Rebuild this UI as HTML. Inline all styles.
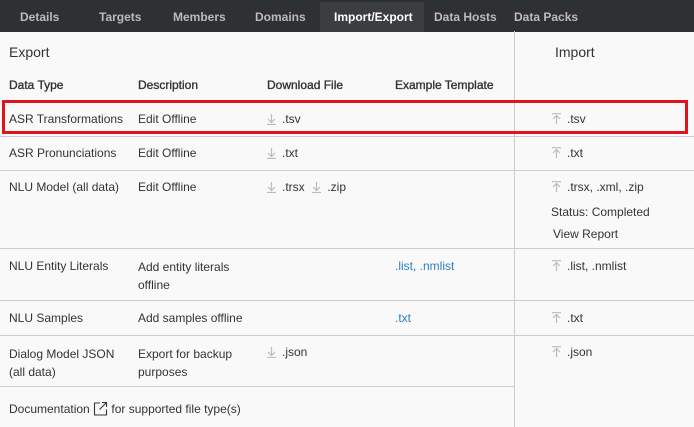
<!DOCTYPE html>
<html><head><style>
body{margin:0;width:694px;height:427px;background:#f9f9f9;font-family:"Liberation Sans",sans-serif;font-size:12px;color:#333;position:relative;overflow:hidden}
.nav{position:absolute;left:0;top:0;width:694px;height:31px;background:#2f3032;border-top:1px solid #233}
.nav span{position:absolute;top:9px;color:#bbb;font-weight:bold;font-size:12px}
.act{position:absolute;left:320px;top:1px;width:104px;height:30px;background:#3c3d3f}
.t{position:absolute;white-space:nowrap}
.hd{-webkit-text-stroke:0.35px #333}
.h{position:absolute;height:1px;background:#ccc;left:0;width:694px}
.v{position:absolute;left:514px;top:31px;width:1px;height:396px;background:#ccc}
.blue{color:#2e7fc0}
svg.a{vertical-align:-2px;margin-right:5px}
.red{position:absolute;left:2px;top:100px;width:680px;height:28px;border:3px solid #e0141e}
</style></head><body>
<svg width="0" height="0" style="position:absolute"><defs>
<symbol id="d" viewBox="0 0 11 12"><path d="M5.5 1v8M2 6l3.5 3.5L9 6M1 11.5h9" fill="none" stroke="#bbb" stroke-width="1.2"/></symbol>
<symbol id="u" viewBox="0 0 11 12"><path d="M5.5 11V3M2 6l3.5-3.5L9 6M1 .7h9" fill="none" stroke="#bbb" stroke-width="1.2"/></symbol>
</defs></svg>
<div class="nav"><div class="act"></div>
<span style="left:20px">Details</span><span style="left:99px">Targets</span><span style="left:173px">Members</span><span style="left:255px">Domains</span><span style="left:334px;color:#fff">Import/Export</span><span style="left:434px">Data Hosts</span><span style="left:514px">Data Packs</span></div>
<div class="v"></div>
<div class="t" style="left:9px;top:44px;font-size:14px">Export</div>
<div class="t" style="left:555px;top:44px;font-size:14px">Import</div>
<div class="t hd" style="left:9px;top:78px">Data Type</div>
<div class="t hd" style="left:138px;top:78px">Description</div>
<div class="t hd" style="left:267px;top:78px">Download File</div>
<div class="t hd" style="left:395px;top:78px">Example Template</div>
<div class="h" style="top:136px"></div>
<div class="h" style="top:170px"></div>
<div class="h" style="top:248px"></div>
<div class="h" style="top:300px"></div>
<div class="h" style="top:335px"></div>
<div class="h" style="top:386px;width:514px"></div>

<div class="t" style="left:9px;top:112px">ASR Transformations</div>
<div class="t" style="left:138px;top:112px">Edit Offline</div>
<div class="t" style="left:266px;top:112px"><svg class="a" width="11" height="12"><use href="#d"/></svg>.tsv</div>
<div class="t" style="left:551px;top:112px"><svg class="a" width="11" height="12"><use href="#u"/></svg>.tsv</div>

<div class="t" style="left:9px;top:146px">ASR Pronunciations</div>
<div class="t" style="left:138px;top:146px">Edit Offline</div>
<div class="t" style="left:266px;top:146px"><svg class="a" width="11" height="12"><use href="#d"/></svg>.txt</div>
<div class="t" style="left:551px;top:146px"><svg class="a" width="11" height="12"><use href="#u"/></svg>.txt</div>

<div class="t" style="left:9px;top:180px">NLU Model (all data)</div>
<div class="t" style="left:138px;top:180px">Edit Offline</div>
<div class="t" style="left:266px;top:180px"><svg class="a" width="11" height="12"><use href="#d"/></svg>.trsx &nbsp;<svg class="a" width="11" height="12"><use href="#d"/></svg>.zip</div>
<div class="t" style="left:551px;top:180px"><svg class="a" width="11" height="12"><use href="#u"/></svg>.trsx, .xml, .zip</div>
<div class="t" style="left:551px;top:205px">Status: Completed</div>
<div class="t" style="left:553px;top:227px">View Report</div>

<div class="t" style="left:9px;top:259px">NLU Entity Literals</div>
<div class="t" style="left:138px;top:258px;line-height:18px">Add entity literals<br>offline</div>
<div class="t blue" style="left:395px;top:259px">.list, .nmlist</div>
<div class="t" style="left:551px;top:259px"><svg class="a" width="11" height="12"><use href="#u"/></svg>.list, .nmlist</div>

<div class="t" style="left:9px;top:311px">NLU Samples</div>
<div class="t" style="left:138px;top:311px">Add samples offline</div>
<div class="t blue" style="left:395px;top:311px">.txt</div>
<div class="t" style="left:551px;top:311px"><svg class="a" width="11" height="12"><use href="#u"/></svg>.txt</div>

<div class="t" style="left:9px;top:345px;line-height:18px">Dialog Model JSON<br>(all data)</div>
<div class="t" style="left:138px;top:345px;line-height:18px">Export for backup<br>purposes</div>
<div class="t" style="left:266px;top:345px"><svg class="a" width="11" height="12"><use href="#d"/></svg>.json</div>
<div class="t" style="left:551px;top:345px"><svg class="a" width="11" height="12"><use href="#u"/></svg>.json</div>

<div class="t" style="left:9px;top:401px">Documentation <svg width="15" height="15" viewBox="0 0 15 15" style="vertical-align:-3px"><path d="M7 2H1.5v12h12V8.5M9 1.5h4.5V6M13.5 1.5L6.5 8.5" fill="none" stroke="#333" stroke-width="1.1"/></svg> for supported file type(s)</div>
<div class="red"></div>
</body></html>
